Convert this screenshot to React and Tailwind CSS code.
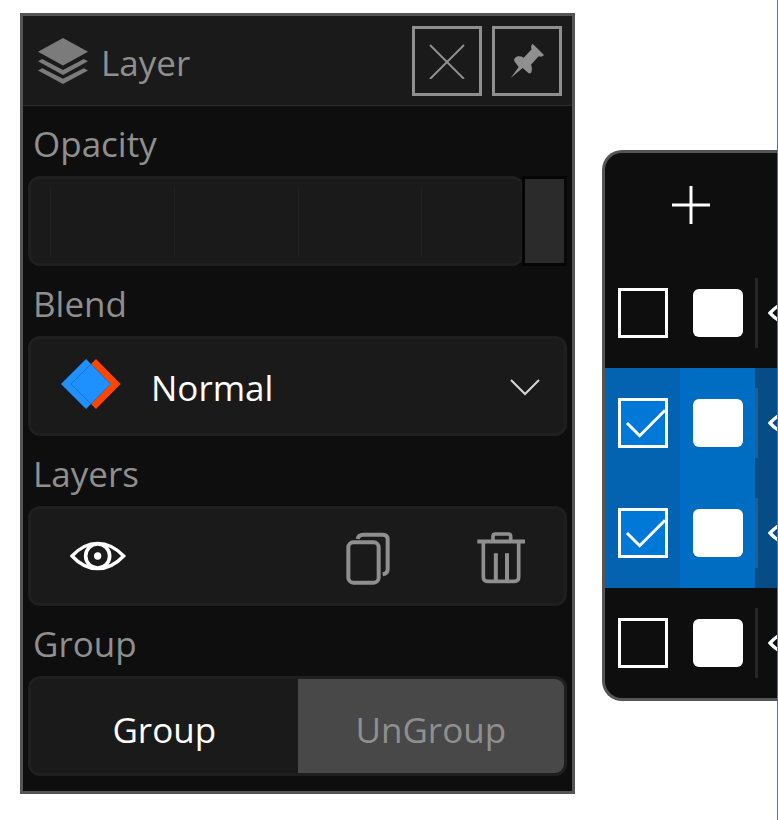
import { useState } from "react";

function LayersIcon() {
  return (
    <svg className="h-[46px] w-[50px] shrink-0" viewBox="0 0 50 46" fill="#7b7b7b" aria-hidden="true">
      <path d="M25 0 50 13.7 25 27.5 0 13.7z" />
      <path d="M0 23.2 4.2 21 25 32 45.8 21 50 23.2 25 37z" />
      <path d="M0 32.5 4.2 30.2 25 40.7 45.8 30.2 50 32.5 25 46z" />
    </svg>
  );
}

function CloseIcon() {
  return (
    <svg className="h-9 w-9" viewBox="0 0 36 36" fill="none" stroke="currentColor" strokeWidth="2" aria-hidden="true">
      <path d="M1 2 35 36M35 2 1 36" />
    </svg>
  );
}

function PinIcon() {
  return (
    <svg className="h-[37px] w-[37px]" viewBox="355 129 111 111" fill="currentColor" aria-hidden="true">
      <path d="M360 237 384 204 371 187Q368 176 382 172 392 171 399 176L423 151Q418 142 426 134L460 168Q454 175 444 172L421 197Q427 212 420 223L414 223 396 207z" />
    </svg>
  );
}

function EyeIcon() {
  return (
    <svg className="h-[30px] w-14 shrink-0" viewBox="149 154 168 90" fill="none" stroke="currentColor" strokeWidth="10" aria-hidden="true">
      <path d="M155 199Q190 161 232 161 274 161 310 199 274 237 232 237 190 237 155 199z" />
      <circle cx="232" cy="199" r="36" strokeWidth="11" />
      <circle cx="232" cy="199" r="11" fill="currentColor" stroke="none" />
    </svg>
  );
}

function CopyIcon() {
  return (
    <svg className="h-[53px] w-11" viewBox="79 125 132 159" fill="none" stroke="currentColor" strokeWidth="12" aria-hidden="true">
      <rect x="86" y="156" width="91" height="121" rx="15" />
      <path d="M114 146Q116 133 131 133H189Q204 133 204 148V236Q204 250 189 252" />
    </svg>
  );
}

function TrashIcon() {
  return (
    <svg className="h-[52px] w-12" viewBox="473 125 144 156" fill="none" stroke="currentColor" strokeWidth="11" aria-hidden="true">
      <path d="M474 153.500H617" strokeWidth="12" />
      <path d="M521 150V138Q521 131 528 131H567Q574 131 574 138V150" />
      <path d="M492 156V260Q492 273 505 273H585Q598 273 598 260V156" />
      <path d="M529.500 189V273M563 189V273" strokeWidth="12" />
    </svg>
  );
}

function BlendIcon() {
  return (
    <svg className="h-[50px] w-[60px]" viewBox="124 87 180 150" aria-hidden="true">
      <path d="M229 87 303 162 229 237 154 162z" fill="#ff4500" />
      <path d="M199 87 273 162 199 237 124 162z" fill="#1e90ff" />
      <path d="M214 102 273 162 214 222 154 162z" fill="none" stroke="#1767b5" strokeWidth="2" />
    </svg>
  );
}

function Label({ htmlFor, children }) {
  const Tag = htmlFor ? "label" : "h2";
  return (
    <Tag htmlFor={htmlFor} className="flex h-[70px] items-center pt-1.5 pl-[5px] text-[#8f8f8f]">
      {children}
    </Tag>
  );
}

function LayerPanel() {
  const [opacity, setOpacity] = useState(100);
  const square = "flex h-[70px] w-[70px] items-center justify-center border-3 border-[#8f8f8f] text-[#8f8f8f]";
  return (
    <section className="min-w-0 flex-1 border-3 border-[#555] bg-[#0e0e0e] text-[35px]">
      <header className="flex h-[90px] items-center border-b border-[#2c2c2c] bg-[#1a1a1a] pr-2.5 pl-[15px]">
        <LayersIcon />
        <h1 className="flex-1 pt-1.5 pl-[13px] text-[#8f8f8f]">Layer</h1>
        <div className="flex gap-2.5">
          <button type="button" aria-label="Close" className={square}>
            <CloseIcon />
          </button>
          <button type="button" aria-label="Pin" className={square}>
            <PinIcon />
          </button>
        </div>
      </header>
      <div className="px-[5px] pb-[15px]">
        <Label htmlFor="opacity">Opacity</Label>
        <div className="grid h-[90px]">
          <div className="col-start-1 row-start-1 mr-[43px] rounded-xl border-3 border-[#1f1f1f] bg-[#1a1a1a]" />
          <div className="col-start-1 row-start-1 mx-[22px] my-2.5 flex">
            <span className="flex-1 border-l border-[#212121]" />
            <span className="flex-1 border-l border-[#212121]" />
            <span className="flex-1 border-l border-[#212121]" />
            <span className="flex-1 border-l border-[#212121]" />
          </div>
          <input
            id="opacity"
            type="range"
            min="0"
            max="100"
            value={opacity}
            onChange={(e) => setOpacity(e.target.value)}
            className="z-10 col-start-1 row-start-1 h-[90px] w-full appearance-none bg-transparent [&::-webkit-slider-thumb]:h-[90px] [&::-webkit-slider-thumb]:w-[45px] [&::-webkit-slider-thumb]:appearance-none [&::-webkit-slider-thumb]:border-3 [&::-webkit-slider-thumb]:border-[#050505] [&::-webkit-slider-thumb]:border-r-[#080808] [&::-webkit-slider-thumb]:bg-[#2b2b2b]"
          />
        </div>

        <Label htmlFor="blend">Blend</Label>
        <div className="grid h-[100px]">
          <select
            id="blend"
            className="col-start-1 row-start-1 w-full appearance-none rounded-xl border-3 border-[#1f1f1f] bg-[#1a1a1a] pt-1 pl-[120px] text-white"
          >
            <option>Normal</option>
          </select>
          <div className="pointer-events-none z-10 col-start-1 row-start-1 flex items-center justify-between pr-[26px] pb-1 pl-[33px]">
            <BlendIcon />
            <svg className="mt-1 h-5 w-8" viewBox="0 0 32 20" fill="none" stroke="#d6d6d6" strokeWidth="2" aria-hidden="true">
              <path d="M2 4 16 18 30 4" />
            </svg>
          </div>
        </div>

        <Label>Layers</Label>
        <div className="grid h-[100px] grid-cols-4 rounded-xl border-3 border-[#1f1f1f] bg-[#1a1a1a] text-[#8f8f8f]">
          <button type="button" aria-label="Visibility" className="flex items-center justify-center text-white">
            <EyeIcon />
          </button>
          <button type="button" aria-label="Duplicate" className="col-start-3 flex items-center justify-center pt-1 pl-2">
            <CopyIcon />
          </button>
          <button type="button" aria-label="Delete" className="flex items-center justify-center pt-1 pl-2">
            <TrashIcon />
          </button>
        </div>

        <Label>Group</Label>
        <div className="grid h-[100px] grid-cols-2 overflow-hidden rounded-xl border-3 border-[#1f1f1f] bg-[#1a1a1a]">
          <button type="button" className="pt-2 text-white">Group</button>
          <button type="button" disabled className="bg-[#484848] pt-2 text-[#8f8f8f]">UnGroup</button>
        </div>
      </div>
    </section>
  );
}

function LayerRow({ name, initial }) {
  const [checked, setChecked] = useState(initial);
  return (
    <li className={checked ? "flex h-[110px] bg-[#064d86]" : "flex h-[110px]"}>
      <div className={checked ? "flex w-[75px] shrink-0 items-center justify-center bg-[#0363b0]" : "flex w-[75px] shrink-0 items-center justify-center"}>
        <div className="grid">
          <input
            type="checkbox"
            aria-label={name}
            checked={checked}
            onChange={(e) => setChecked(e.target.checked)}
            className="col-start-1 row-start-1 h-[50px] w-[50px] appearance-none border-3 border-white checked:bg-[#0078d7]"
          />
          {checked && (
            <svg className="pointer-events-none z-10 col-start-1 row-start-1 h-[50px] w-[50px]" viewBox="0 0 50 50" fill="none" stroke="white" strokeWidth="3" aria-hidden="true">
              <path d="M9 25 21.700 37.700 47 12.300" />
            </svg>
          )}
        </div>
      </div>
      <div className={checked ? "flex w-[75px] shrink-0 items-center justify-center bg-[#006cc2]" : "flex w-[75px] shrink-0 items-center justify-center"}>
        <span className="h-12 w-[50px] rounded-md bg-white" />
      </div>
      <div className="flex items-center gap-2.5">
        <span className="h-[70px] w-[3px] shrink-0 bg-white/10" />
        <button type="button" aria-label="Toggle visibility" className="text-white">
          <EyeIcon />
        </button>
      </div>
    </li>
  );
}

export default function App() {
  return (
    <main className="flex min-h-screen items-start overflow-hidden border-r border-[#2b7cc9] bg-white pt-[13px] pl-5 font-['Open_Sans','Noto_Sans',sans-serif]">
      <LayerPanel />
      <section className="mt-[137px] ml-[27px] w-[175px] shrink-0 overflow-hidden rounded-l-[20px] border-3 border-r-0 border-[#555] bg-[#0e0e0e]">
        <div className="flex h-[105px] items-center pb-0.5 pl-[67px]">
          <button type="button" aria-label="Add layer" className="text-white">
            <svg className="h-[38px] w-[38px]" viewBox="0 0 38 38" fill="none" stroke="currentColor" strokeWidth="3" aria-hidden="true">
              <path d="M19 0V38M0 19H38" />
            </svg>
          </button>
        </div>
        <ul>
          <LayerRow name="Layer 1" initial={false} />
          <LayerRow name="Layer 2" initial={true} />
          <LayerRow name="Layer 3" initial={true} />
          <LayerRow name="Layer 4" initial={false} />
        </ul>
      </section>
    </main>
  );
}
